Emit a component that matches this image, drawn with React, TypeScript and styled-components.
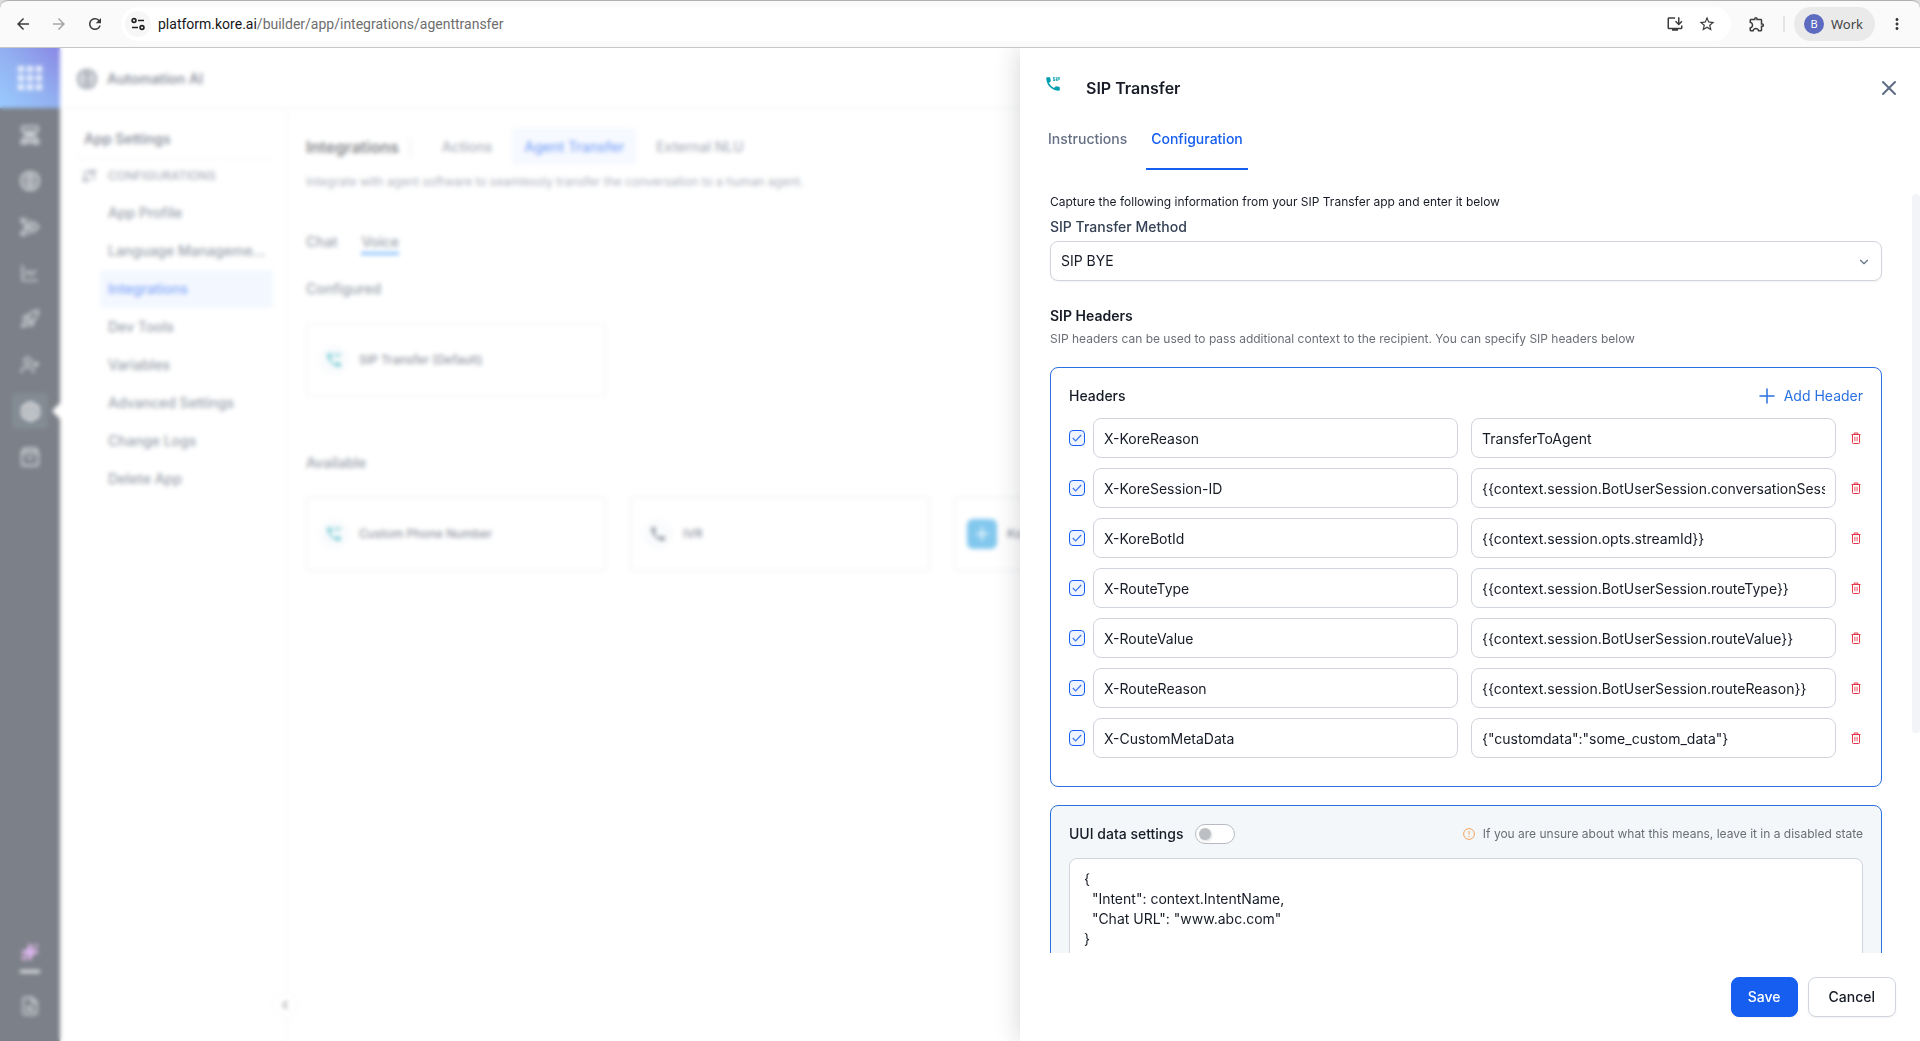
import React, { useEffect, useRef, useState } from 'react';
import styled, { createGlobalStyle } from 'styled-components';
import {
  MdArrowBack,
  MdArrowForward,
  MdRefresh,
  MdInstallDesktop,
  MdStarOutline,
  MdOutlineExtension,
  MdMoreVert,
  MdDialerSip,
  MdCall,
} from 'react-icons/md';
import {
  Bolt,
  ChartLine,
  ChevronDown,
  ChevronLeft,
  FileSearch,
  Rocket,
  Sparkles,
  UserPlus,
  Plus,
  X,
} from 'lucide-react';

const GlobalStyle = createGlobalStyle`
  * { box-sizing: border-box; }
  body {
    margin: 0;
    font-family: Inter, "Liberation Sans", sans-serif;
    font-size: 14px;
    line-height: 20px;
    color: #161b26;
    background: #fff;
  }
  button, input, select, textarea { font: inherit; color: inherit; }
  button { cursor: pointer; }
  h1, h2, h3, p { margin: 0; }
  svg { display: block; flex: none; }
`;

const Page = styled.div`
  display: flex;
  flex-direction: column;
  height: 100vh;
  overflow: hidden;
  background: #fff;
`;

/* Browser toolbar */

const BrowserBack = styled.div`
  background: #dcdcdc;
`;

const BrowserBar = styled.header`
  display: flex;
  align-items: center;
  height: 48px;
  padding: 0 5px;
  background: #fafafa;
  border-top: 1px solid #b0b0b0;
  border-bottom: 1px solid #c6c6c6;
  border-radius: 8px 8px 0 0;
  font-family: "Noto Sans", sans-serif;
`;

const BarButton = styled.button<{ $dim?: boolean }>`
  display: grid;
  place-items: center;
  width: 36px;
  height: 34px;
  margin: 0;
  padding: 0;
  border: 0;
  background: none;
  color: ${(p) => (p.$dim ? '#a6a6a6' : '#3c3c3c')};
  font-size: 18px;
`;

const Omnibox = styled.div`
  display: flex;
  flex: 1;
  align-items: center;
  height: 34px;
  margin: 0 8px;
  padding: 0 8px 0 4px;
  border-radius: 17px;
  background: #fff;
`;

const SiteInfo = styled.button`
  display: grid;
  place-items: center;
  width: 26px;
  height: 26px;
  padding: 0;
  border: 0;
  border-radius: 50%;
  background: #f7f7f7;
`;

const Url = styled.div`
  flex: 1;
  padding-left: 7px;
  font-family: Roboto, "Noto Sans", sans-serif;
  font-size: 14px;
  color: #6e6e6e;
  strong { font-weight: 400; color: #161616; }
`;

const OmniAction = styled(BarButton)`
  width: 32px;
`;

const BarDivider = styled.span`
  width: 2px;
  height: 16px;
  margin: 0 9px 0 8px;
  background: #e4e4e4;
`;

const Profile = styled.button`
  display: flex;
  align-items: center;
  gap: 7px;
  height: 34px;
  margin-right: 4px;
  padding: 0 12px 0 10px;
  border: 0;
  border-radius: 17px;
  background: #eaeaea;
  color: #444;
  font-size: 13px;
`;

const Avatar = styled.span`
  display: grid;
  place-items: center;
  width: 20px;
  height: 20px;
  border-radius: 50%;
  background: #5c6bc0;
  color: #fff;
  font-size: 11px;
`;

/* Application shell behind the drawer */

const Stage = styled.div`
  position: relative;
  display: flex;
  flex: 1;
  min-height: 0;
  overflow: hidden;
`;

const Rail = styled.nav`
  display: flex;
  flex-direction: column;
  align-items: center;
  width: 60px;
  padding-bottom: 7px;
  background: #101828;
  color: #b6bac4;
`;

const Launcher = styled.button`
  display: grid;
  grid-template-columns: repeat(3, 6px);
  gap: 3px;
  place-content: center;
  width: 60px;
  height: 60px;
  margin-bottom: 9px;
  padding: 0;
  border: 0;
  background: linear-gradient(45deg, #47a0ff, #3a70e4 50%, #2a26d0);
`;

const LauncherDot = styled.span`
  width: 6px;
  height: 6px;
  background: #e4ecff;
`;

const RailButton = styled.button<{ $active?: boolean }>`
  position: relative;
  display: grid;
  place-items: center;
  width: 36px;
  height: 36px;
  margin-bottom: 10px;
  padding: 0;
  border: 0;
  border-radius: 4px;
  background: ${(p) => (p.$active ? '#1f2d3d' : 'none')};
  color: ${(p) => (p.$active ? '#ffffff' : 'inherit')};
  &::after {
    content: '';
    display: ${(p) => (p.$active ? 'block' : 'none')};
    position: absolute;
    right: -12px;
    top: 10px;
    border: 8px solid transparent;
    border-left: 0;
    border-right-color: #fff;
  }
`;

const RailSpacer = styled.div`
  flex: 1;
`;

const RailRule = styled.span`
  width: 20px;
  height: 3px;
  margin: -10px 0 15px;
  background: #d0d3da;
`;

const Workspace = styled.div`
  display: flex;
  flex: 1;
  flex-direction: column;
  min-width: 0;
`;

const TopBar = styled.header`
  display: flex;
  align-items: center;
  gap: 10px;
  height: 61px;
  padding: 2px 0 0 17px;
  border-bottom: 1px solid #e4e7ec;
  font-weight: 600;
  color: #344054;
`;

const Columns = styled.div`
  display: flex;
  flex: 1;
  min-height: 0;
`;

const SettingsNav = styled.nav`
  position: relative;
  width: 227px;
  padding: 20px 13px 0 16px;
  border-right: 1px solid #e4e7ec;
`;

const NavTitle = styled.h2`
  padding: 0 8px 8px;
  border-bottom: 1px solid #eaecf0;
  font-size: 14px;
  font-weight: 600;
  color: #344054;
`;

const NavGroup = styled.div`
  display: flex;
  align-items: center;
  gap: 10px;
  height: 36px;
  padding-left: 6px;
  font-size: 12px;
  font-weight: 500;
  color: #667085;
`;

const NavLink = styled.a<{ $active?: boolean }>`
  display: block;
  height: 38px;
  margin-left: 24px;
  padding: 9px 4px 9px 8px;
  border-radius: 4px;
  overflow: hidden;
  white-space: nowrap;
  text-decoration: none;
  font-weight: 500;
  background: ${(p) => (p.$active ? '#eaf1ff' : 'none')};
  color: ${(p) => (p.$active ? '#155eef' : '#475467')};
`;

const CollapseButton = styled.button`
  position: absolute;
  right: -12px;
  bottom: 23px;
  display: grid;
  place-items: center;
  width: 26px;
  height: 26px;
  padding: 0;
  border: 1px solid #f2f4f7;
  border-radius: 50%;
  background: #fff;
`;

const Main = styled.main`
  flex: 1;
  min-width: 0;
  padding: 19px 0 0 19px;
  overflow: hidden;
`;

const MainHead = styled.div`
  display: flex;
  align-items: center;
`;

const MainTitle = styled.h1`
  margin-right: 19px;
  padding-right: 11px;
  border-right: 1px solid #d0d5dd;
  font-size: 16px;
  font-weight: 600;
`;

const PillTab = styled.button<{ $active?: boolean }>`
  height: 37px;
  margin-right: 8px;
  padding: 0 12px;
  border: 0;
  border-radius: 4px;
  font-weight: 500;
  background: ${(p) => (p.$active ? '#eff4ff' : 'none')};
  color: ${(p) => (p.$active ? '#155eef' : '#667085')};
`;

const MainNote = styled.p`
  margin-top: 7px;
  font-size: 12px;
  color: #667085;
`;

const ChannelTabs = styled.div`
  display: flex;
  align-items: flex-start;
  gap: 24px;
  margin: 40px 0 24px;
`;

const ChannelTab = styled.button<{ $active?: boolean }>`
  padding: 0;
  border: 0;
  border-bottom: 3px solid ${(p) => (p.$active ? '#2e90fa' : 'transparent')};
  background: none;
  font-weight: 500;
  color: #475467;
`;

const GroupTitle = styled.h3`
  margin-bottom: 24px;
  font-size: 14px;
  font-weight: 500;
  color: #475467;
`;

const CardRow = styled.div`
  display: flex;
  gap: 24px;
  margin-bottom: 56px;
`;

const Card = styled.article`
  display: flex;
  flex: none;
  align-items: center;
  gap: 10px;
  width: 300px;
  height: 74px;
  padding-left: 12px;
  border: 1px solid #d9dce2;
  border-radius: 4px;
  font-size: 12px;
  font-weight: 500;
  color: #344054;
`;

const CardIcon = styled.span<{ $filled?: boolean }>`
  display: grid;
  place-items: center;
  width: 30px;
  height: 30px;
  border-radius: ${(p) => (p.$filled ? '6px' : '50%')};
  background: ${(p) => (p.$filled ? '#1d9be0' : '#f5f8fb')};
  color: ${(p) => (p.$filled ? '#fff' : '#344054')};
`;

const Backdrop = styled.div`
  position: absolute;
  inset: 0;
  background: rgba(255, 255, 255, 0.45);
  backdrop-filter: blur(2px);
`;

/* Drawer */

const Drawer = styled.aside`
  position: absolute;
  top: 0;
  right: 0;
  bottom: 0;
  display: flex;
  flex-direction: column;
  width: 900px;
  max-width: 100%;
  background: #fff;
  box-shadow: 0 0 24px rgba(16, 24, 40, 0.18);
`;

const DrawerHead = styled.header`
  display: flex;
  align-items: center;
  padding: 28px 19px 0 24px;
  height: 52px;
`;

const DrawerIcon = styled.span`
  height: 26px;
  margin-right: 24px;
  color: #00a0b0;
`;

const DrawerTitle = styled.h2`
  flex: 1;
  font-size: 16px;
  line-height: 24px;
  font-weight: 600;
`;

const IconButton = styled.button<{ $color: string; $size: number }>`
  display: grid;
  place-items: center;
  width: ${(p) => p.$size}px;
  height: ${(p) => p.$size}px;
  padding: 0;
  border: 0;
  background: none;
  color: ${(p) => p.$color};
`;

const Tabs = styled.div`
  display: flex;
  gap: 14px;
  padding: 21px 23px 24px;
`;

const Tab = styled.button<{ $active?: boolean }>`
  height: 49px;
  padding: 0 5px 11px;
  border: 0;
  border-bottom: 2px solid ${(p) => (p.$active ? '#155eef' : 'transparent')};
  background: none;
  font-weight: 500;
  color: ${(p) => (p.$active ? '#155eef' : '#667085')};
`;

const ScrollFrame = styled.div`
  display: flex;
  flex: 1;
  min-height: 0;
`;

const ScrollArea = styled.div`
  flex: 1;
  min-width: 0;
  padding: 0 30px 56px;
  overflow-y: auto;
  scrollbar-width: none;
`;

const ScrollTrack = styled.div`
  width: 8px;
`;

const ScrollThumb = styled.div`
  border-radius: 4px;
  background: #f2f4f7;
`;

const Lead = styled.p`
  font-size: 12px;
  line-height: 16px;
  margin-bottom: 7px;
`;

const FieldLabel = styled.label`
  display: block;
  margin-bottom: 4px;
  font-weight: 500;
  color: #344054;
`;

const SelectWrap = styled.div`
  display: grid;
  align-items: center;
  & > * { grid-area: 1 / 1; }
  & > svg { justify-self: end; margin: 2px 11px 0; color: #667085; pointer-events: none; }
`;

const Select = styled.select`
  appearance: none;
  width: 100%;
  height: 40px;
  padding: 0 10px;
  border: 1px solid #d0d5dd;
  border-radius: 8px;
  background: #fff;
  box-shadow: 0 1px 2px rgba(16, 24, 40, 0.05);
`;

const SectionTitle = styled.h3`
  margin-top: 25px;
  font-size: 14px;
  font-weight: 600;
`;

const Hint = styled.p`
  margin-top: 3px;
  font-size: 12px;
  line-height: 20px;
  color: #6a6e76;
`;

const Panel = styled.section<{ $tinted?: boolean }>`
  margin-top: 18px;
  padding: 18px 18px 28px;
  border: 1px solid #2970e0;
  border-radius: 8px;
  background: ${(p) => (p.$tinted ? '#f3f7fa' : '#fff')};
`;

const PanelHead = styled.div`
  display: flex;
  align-items: center;
  justify-content: space-between;
  height: 20px;
  font-weight: 500;
`;

const AddButton = styled.button`
  display: flex;
  align-items: center;
  gap: 5px;
  padding: 0;
  border: 0;
  background: none;
  color: #2970e0;
  font-weight: 400;
`;

const HeaderList = styled.div`
  display: grid;
  gap: 10px;
  margin-top: 12px;
`;

const HeaderRow = styled.div`
  display: grid;
  grid-template-columns: 16px 1fr 19px;
  column-gap: 8px;
  align-items: center;
  & > button { justify-self: end; }
`;

const FieldPair = styled.div`
  display: grid;
  grid-template-columns: 1fr 1fr;
  gap: 13px;
`;

const CheckBox = styled.span`
  display: grid;
  place-items: center;
  width: 16px;
  height: 16px;
  & > * { grid-area: 1 / 1; }
  & > svg { pointer-events: none; visibility: hidden; }
  & > input:checked + svg { visibility: visible; }
`;

const CheckInput = styled.input`
  appearance: none;
  width: 16px;
  height: 16px;
  margin: 0;
  border: 1px solid #155eef;
  border-radius: 4px;
  background: #eff4ff;
`;

const TextInput = styled.input`
  min-width: 0;
  height: 40px;
  padding: 0 10px;
  border: 1px solid #d0d5dd;
  border-radius: 8px;
  background: #fff;
`;

const ToggleLabel = styled.label`
  display: flex;
  align-items: center;
  gap: 12px;
`;

const Toggle = styled.input`
  appearance: none;
  display: flex;
  align-items: center;
  width: 40px;
  height: 20px;
  margin: 0;
  padding: 0 3px;
  border: 1px solid #b8bcc2;
  border-radius: 10px;
  background: #fff;
  &::before {
    content: '';
    width: 12px;
    height: 12px;
    border-radius: 50%;
    background: #bcc0c4;
    box-shadow: 1px 1px 3px rgba(0, 0, 0, 0.15);
  }
  &:checked { justify-content: flex-end; }
`;

const Warning = styled.span`
  display: flex;
  align-items: center;
  gap: 8px;
  font-size: 12px;
  font-weight: 400;
  color: #6a6e76;
`;

const CodeArea = styled.textarea`
  display: block;
  width: 100%;
  height: 320px;
  margin-top: 14px;
  padding: 10px 14px;
  border: 1px solid #d0d5dd;
  border-radius: 8px;
  background: #fff;
  resize: none;
`;

const Footer = styled.footer`
  display: flex;
  justify-content: flex-end;
  gap: 10px;
  padding: 24px;
`;

const ActionButton = styled.button<{ $primary?: boolean }>`
  height: 40px;
  padding: 0 ${(p) => (p.$primary ? '16px' : '20px')};
  border: 1px solid ${(p) => (p.$primary ? '#155eef' : '#d0d5dd')};
  border-radius: 8px;
  background: ${(p) => (p.$primary ? '#155eef' : '#fff')};
  color: ${(p) => (p.$primary ? '#fff' : '#161b26')};
  box-shadow: 0 1px 2px rgba(16, 24, 40, 0.05);
  font-weight: 500;
`;

/* Icons */

const TuneIcon = () => (
  <svg width="16" height="16" viewBox="0 0 16 16" fill="none" stroke="#222" strokeWidth="1.7">
    <circle cx="4" cy="4.5" r="1.9" />
    <path d="M8 4.5h6M2 11.5h6" />
    <circle cx="12" cy="11.5" r="1.9" />
  </svg>
);

const DesignerIcon = () => (
  <svg width="20" height="20" viewBox="0 0 20 20" fill="none" stroke="currentColor" strokeWidth="1.8">
    <rect x="2" y="1.500" width="16" height="5.500" rx="1.500" />
    <path d="M4 7l6 3 6-3M5 7v4l-2 4M15 7v4l2 4" />
    <circle cx="10" cy="11.5" r="2.5" />
    <path d="M1.500 18.500v-3h5v3zM13.500 18.500v-3h5v3zM7 17h6" />
  </svg>
);

const OrbIcon = () => (
  <svg width="20" height="20" viewBox="0 0 20 20" fill="none" stroke="currentColor" strokeWidth="2.4">
    <rect x="1.5" y="1.5" width="17" height="17" rx="7.5" />
    <rect x="6.5" y="6" width="7" height="8" rx="2" strokeWidth="1.8" />
    <path d="M10 3v14" strokeWidth="1.6" />
  </svg>
);

const FlowIcon = () => (
  <svg width="20" height="20" viewBox="0 0 20 20" fill="none" stroke="currentColor" strokeWidth="1.8">
    <circle cx="3" cy="3.5" r="1.8" />
    <circle cx="3" cy="16.5" r="1.8" />
    <path d="M4.500 5l4 5-4 5M3 10h5M8 3l3 3M8 17l3-3" />
    <path d="M14 5.5l4.5 4.5-4.5 4.5L9.5 10z" />
  </svg>
);

const TaskIcon = () => (
  <svg width="20" height="20" viewBox="0 0 20 20" fill="none" stroke="currentColor" strokeWidth="1.8">
    <path d="M4 1.5h12l2 4V17q0 1.500-1.500 1.500h-13Q2 18.500 2 17V5.500zM2 5.500h16M7 10q3 3 6 0" />
  </svg>
);

const ConfigIcon = () => (
  <svg width="16" height="16" viewBox="0 0 16 16" fill="none" stroke="currentColor" strokeWidth="1.4">
    <path d="M1 4h7M1 8h4M10 3h5M12 3v9M4 12h5" />
    <circle cx="3" cy="12" r="1.8" />
    <circle cx="9" cy="4" r="1.8" />
  </svg>
);

const TrashIcon = () => (
  <svg width="10" height="12" viewBox="0 0 10 12" fill="none" stroke="#e5384b" strokeWidth="1">
    <path d="M0.5 2.5h9M3.2 2.3V1h3.6v1.3M1.5 2.5v8.2q0 .8.8.8h5.4q.8 0 .8-.8V2.5" />
    <path d="M3.9 4.8v4.4M6.1 4.8v4.4" strokeWidth=".9" />
  </svg>
);

const TickIcon = () => (
  <svg width="10" height="8" viewBox="0 0 10 8" fill="none" stroke="#3b76f2" strokeWidth="1.2">
    <path d="M0.8 4l2.8 2.8L9.2 1" />
  </svg>
);

const AlertIcon = () => (
  <svg width="12" height="12" viewBox="0 0 12 12" fill="none" stroke="#f5a35c" strokeWidth="1">
    <circle cx="6" cy="6" r="5.4" />
    <path d="M6 3v3.6M6 8v1" />
  </svg>
);

const railItems = [
  { label: 'Designer', icon: <DesignerIcon /> },
  { label: 'Models', icon: <OrbIcon /> },
  { label: 'Flows', icon: <FlowIcon /> },
  { label: 'Analytics', icon: <ChartLine size={20} /> },
  { label: 'Deploy', icon: <Rocket size={20} /> },
  { label: 'Users', icon: <UserPlus size={20} /> },
  { label: 'Settings', icon: <Bolt size={21} strokeWidth={2.4} />, active: true },
  { label: 'Tasks', icon: <TaskIcon /> },
];

const navItems = [
  'App Profile',
  'Language Manageme...',
  'Integrations',
  'Dev Tools',
  'Variables',
  'Advanced Settings',
  'Change Logs',
  'Delete App',
];

const initialHeaders = [
  ['X-KoreReason', 'TransferToAgent'],
  ['X-KoreSession-ID', '{{context.session.BotUserSession.conversationSessionId}}'],
  ['X-KoreBotId', '{{context.session.opts.streamId}}'],
  ['X-RouteType', '{{context.session.BotUserSession.routeType}}'],
  ['X-RouteValue', '{{context.session.BotUserSession.routeValue}}'],
  ['X-RouteReason', '{{context.session.BotUserSession.routeReason}}'],
  ['X-CustomMetaData', '{"customdata":"some_custom_data"}'],
];

const uuiSample = `{
  "Intent": context.IntentName,
  "Chat URL": "www.abc.com"
}`;

function Browser() {
  return (
    <BrowserBack>
      <BrowserBar>
        <BarButton aria-label="Back"><MdArrowBack /></BarButton>
        <BarButton aria-label="Forward" $dim><MdArrowForward /></BarButton>
        <BarButton aria-label="Reload"><MdRefresh /></BarButton>
        <Omnibox>
          <SiteInfo aria-label="Site information"><TuneIcon /></SiteInfo>
          <Url><strong>platform.kore.ai</strong>/builder/app/integrations/agenttransfer</Url>
          <OmniAction aria-label="Install app"><MdInstallDesktop /></OmniAction>
          <OmniAction aria-label="Bookmark"><MdStarOutline /></OmniAction>
        </Omnibox>
        <BarButton aria-label="Extensions"><MdOutlineExtension /></BarButton>
        <BarDivider />
        <Profile><Avatar>B</Avatar>Work</Profile>
        <BarButton aria-label="Menu"><MdMoreVert /></BarButton>
      </BrowserBar>
    </BrowserBack>
  );
}

function AppShell() {
  return (
    <>
      <Rail>
        <Launcher aria-label="Apps">
          {Array.from({ length: 9 }, (_, i) => <LauncherDot key={i} />)}
        </Launcher>
        {railItems.map(({ label, icon, active }) => (
          <RailButton key={label} aria-label={label} $active={active}>{icon}</RailButton>
        ))}
        <RailSpacer />
        <RailButton aria-label="Assistant"><Sparkles size={18} color="#e58af0" fill="#a877e8" /></RailButton>
        <RailRule />
        <RailButton aria-label="Documents"><FileSearch size={20} /></RailButton>
      </Rail>
      <Workspace>
        <TopBar><OrbIcon />Automation AI</TopBar>
        <Columns>
          <SettingsNav>
            <NavTitle>App Settings</NavTitle>
            <NavGroup><ConfigIcon />CONFIGURATIONS</NavGroup>
            {navItems.map((item) => (
              <NavLink key={item} href="#" $active={item === 'Integrations'}>{item}</NavLink>
            ))}
            <CollapseButton aria-label="Collapse"><ChevronLeft size={14} /></CollapseButton>
          </SettingsNav>
          <Main>
            <MainHead>
              <MainTitle>Integrations</MainTitle>
              <PillTab>Actions</PillTab>
              <PillTab $active>Agent Transfer</PillTab>
              <PillTab>External NLU</PillTab>
            </MainHead>
            <MainNote>Integrate with agent software to seamlessly transfer the conversation to a human agent.</MainNote>
            <ChannelTabs>
              <ChannelTab>Chat</ChannelTab>
              <ChannelTab $active>Voice</ChannelTab>
            </ChannelTabs>
            <GroupTitle>Configured</GroupTitle>
            <CardRow>
              <Card><CardIcon><MdDialerSip size={18} color="#00a0b0" /></CardIcon>SIP Transfer (Default)</Card>
            </CardRow>
            <GroupTitle>Available</GroupTitle>
            <CardRow>
              <Card><CardIcon><MdDialerSip size={18} color="#00a0b0" /></CardIcon>Custom Phone Number</Card>
              <Card><CardIcon><MdCall size={18} /></CardIcon>IVR</Card>
              <Card><CardIcon $filled><Plus size={20} /></CardIcon>Kore</Card>
            </CardRow>
          </Main>
        </Columns>
      </Workspace>
    </>
  );
}

function Scroller({ children }: { children: React.ReactNode }) {
  const area = useRef<HTMLDivElement>(null);
  const [thumb, setThumb] = useState({ top: 0, size: 0 });

  const measure = () => {
    const el = area.current;
    if (!el) return;
    const ratio = el.clientHeight / el.scrollHeight;
    setThumb({ top: el.scrollTop * ratio, size: ratio < 1 ? el.clientHeight * ratio : 0 });
  };

  useEffect(() => {
    measure();
    window.addEventListener('resize', measure);
    return () => window.removeEventListener('resize', measure);
  }, [children]);

  return (
    <ScrollFrame>
      <ScrollArea ref={area} onScroll={measure}>{children}</ScrollArea>
      <ScrollTrack>
        <ScrollThumb style={{ height: thumb.size, marginTop: thumb.top }} />
      </ScrollTrack>
    </ScrollFrame>
  );
}

function TransferDrawer() {
  const [headers, setHeaders] = useState(initialHeaders);
  return (
    <Drawer>
      <DrawerHead>
        <DrawerIcon><MdDialerSip size={18} /></DrawerIcon>
        <DrawerTitle>SIP Transfer</DrawerTitle>
        <IconButton aria-label="Close" $color="#5d6b82" $size={24}><X size={24} /></IconButton>
      </DrawerHead>
      <Tabs>
        <Tab>Instructions</Tab>
        <Tab $active>Configuration</Tab>
      </Tabs>
      <Scroller>
        <Lead>Capture the following information from your SIP Transfer app and enter it below</Lead>
        <FieldLabel htmlFor="method">SIP Transfer Method</FieldLabel>
        <SelectWrap>
          <Select id="method" defaultValue="SIP BYE">
            <option>SIP BYE</option>
            <option>SIP REFER</option>
          </Select>
          <ChevronDown size={14} />
        </SelectWrap>
        <SectionTitle>SIP Headers</SectionTitle>
        <Hint>SIP headers can be used to pass additional context to the recipient. You can specify SIP headers below</Hint>
        <Panel>
          <PanelHead>
            Headers
            <AddButton onClick={() => setHeaders([...headers, ['', '']])}>
              <Plus size={24} strokeWidth={1.5} />Add Header
            </AddButton>
          </PanelHead>
          <HeaderList>
            {headers.map(([name, value], i) => (
              <HeaderRow key={`${name}-${i}`}>
                <CheckBox>
                  <CheckInput type="checkbox" defaultChecked aria-label={`Enable ${name}`} />
                  <TickIcon />
                </CheckBox>
                <FieldPair>
                  <TextInput defaultValue={name} aria-label="Header name" />
                  <TextInput defaultValue={value} aria-label="Header value" />
                </FieldPair>
                <IconButton
                  $color="#e5384b"
                  $size={14}
                  aria-label={`Delete ${name}`}
                  onClick={() => setHeaders(headers.filter((_, j) => j !== i))}
                >
                  <TrashIcon />
                </IconButton>
              </HeaderRow>
            ))}
          </HeaderList>
        </Panel>
        <Panel $tinted>
          <PanelHead>
            <ToggleLabel>UUI data settings<Toggle type="checkbox" role="switch" /></ToggleLabel>
            <Warning><AlertIcon />If you are unsure about what this means, leave it in a disabled state</Warning>
          </PanelHead>
          <CodeArea aria-label="UUI data" defaultValue={uuiSample} />
        </Panel>
      </Scroller>
      <Footer>
        <ActionButton $primary>Save</ActionButton>
        <ActionButton>Cancel</ActionButton>
      </Footer>
    </Drawer>
  );
}

export default function App() {
  return (
    <Page>
      <GlobalStyle />
      <Browser />
      <Stage>
        <AppShell />
        <Backdrop />
        <TransferDrawer />
      </Stage>
    </Page>
  );
}
